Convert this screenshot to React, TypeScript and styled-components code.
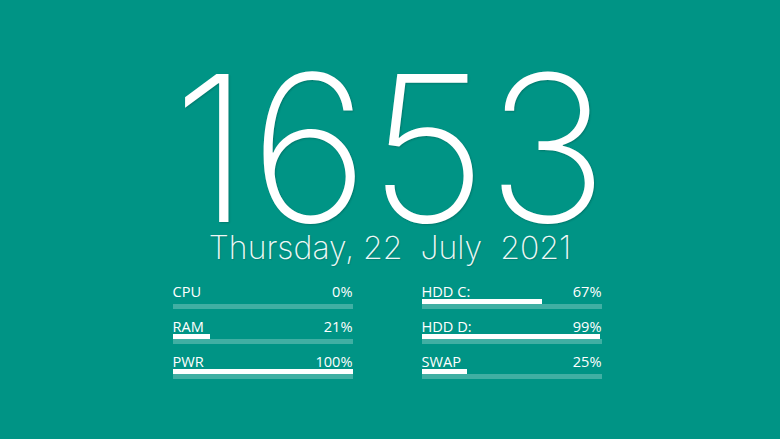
import React from "react";
import styled, { createGlobalStyle } from "styled-components";

const GlobalStyle = createGlobalStyle`
  html, body { margin: 0; padding: 0; }
  body {
    background: #009485;
    color: #ffffff;
    width: 780px;
    height: 439px;
    overflow: hidden;
  }
`;

const Screen = styled.main`
  width: 780px;
  height: 439px;
  display: flex;
  flex-direction: column;
  align-items: center;
`;

const Panel = styled.section`
  margin-top: 46px;
  display: flex;
  flex-direction: column;
  align-items: center;
`;

const Clock = styled.div`
  font-family: Inter, "Noto Sans", sans-serif;
  font-weight: 185;
  font-size: 204px;
  line-height: 204px;
  height: 204px;
  white-space: nowrap;
  color: #ffffff;
  text-shadow: 1px 1px 2px rgba(0, 0, 0, 0.18);
`;

const DateLine = styled.div`
  margin-top: -21.6px;
  font-family: Inter, "Noto Sans", sans-serif;
  font-weight: 170;
  font-size: 32px;
  line-height: 40px;
  height: 40px;
  white-space: pre;
  color: #eef8f6;
  text-shadow: 1px 1px 1px rgba(0, 0, 0, 0.12);
`;

const Stats = styled.section`
  margin-top: 15px;
  margin-right: 6px;
  display: grid;
  grid-template-columns: 180px 180px;
  column-gap: 69px;
  row-gap: 9px;
  grid-auto-flow: column;
  grid-template-rows: repeat(3, auto);
`;

const Stat = styled.div`
  display: flex;
  flex-direction: column;
`;

const StatHead = styled.div`
  display: flex;
  justify-content: space-between;
  font-family: "Open Sans", "Noto Sans", sans-serif;
  font-size: 14.6px;
  line-height: 16px;
  height: 16px;
  color: #ffffff;
`;

const Fill = styled.div`
  height: 5px;
  background: #ffffff;
`;

const Track = styled.div`
  height: 5px;
  background: rgba(255, 255, 255, 0.25);
`;

const stats: { label: string; value: number }[] = [
  { label: "CPU", value: 0 },
  { label: "RAM", value: 21 },
  { label: "PWR", value: 100 },
  { label: "HDD C:", value: 67 },
  { label: "HDD D:", value: 99 },
  { label: "SWAP", value: 25 },
];

export default function App() {
  return (
    <>
      <GlobalStyle />
      <Screen>
        <Panel>
          <Clock>1653</Clock>
          <DateLine>{"Thursday, 22  July  2021"}</DateLine>
        </Panel>
        <Stats>
          {stats.map((s) => (
            <Stat key={s.label}>
              <StatHead>
                <span>{s.label}</span>
                <span>{s.value}%</span>
              </StatHead>
              <Fill style={{ width: `${s.value}%` }} />
              <Track />
            </Stat>
          ))}
        </Stats>
      </Screen>
    </>
  );
}
